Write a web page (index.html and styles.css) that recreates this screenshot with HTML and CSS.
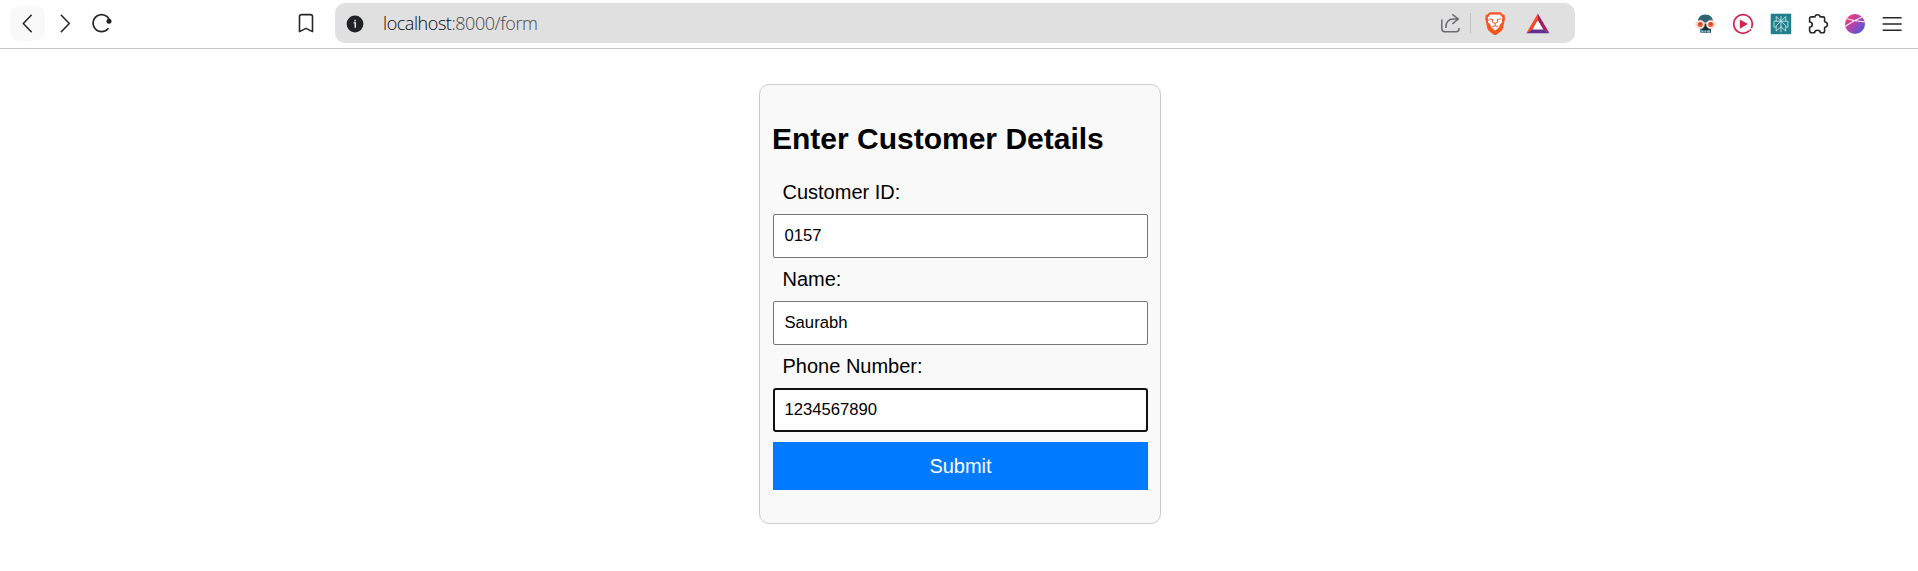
FILE: index.html
```html
<!DOCTYPE html>
<html lang="en">
<head>
<meta charset="utf-8">
<title>Customer form</title>
<link rel="stylesheet" href="styles.css">
</head>
<body>
<header class="toolbar">
  <nav class="nav">
    <span class="nav-button"><svg width="35" height="35" viewBox="10 6 35 35"><path class="line" d="M31.200 15.300 23.300 23.500l7.900 8.200"/></svg></span>
    <svg class="forward" width="35" height="35" viewBox="48 6 35 35"><path class="line" d="m61.300 15.300 8 8.200-8 8.200"/></svg>
    <svg width="35" height="35" viewBox="85 6 35 35"><path class="line" d="M108 28.700A8.500 8.500 0 1 1 109.300 19.600"/><circle class="ink" cx="109" cy="21.200" r="2.500"/></svg>
  </nav>
  <svg class="bookmark" width="16" height="20" viewBox="298 13 16 20"><path class="line" d="M301.500 14.600h9q2 0 2 2v15l-6.500-3.200-6.500 3.200v-15q0-2 2-2Z"/></svg>
  <div class="address">
    <svg class="info" width="18" height="18" viewBox="346 15 18 18"><circle class="ink" cx="355" cy="24" r="8.400"/><path d="M353.600 22.900h1.700v4.800M355.100 19.700v1.700" fill="none" stroke="#eee" stroke-width="1.400"/></svg>
    <span class="url"><span class="host">localhost</span>:8000/form</span>
    <svg class="share" width="20" height="20" viewBox="1440 13.500 20 20"><path d="M1441.800 20v9q0 3.200 3.200 3.200h11q3 0 3-2.600v-1M1445.800 28.500q0-9 8-9h4.200M1452.400 14.800l5.800 4.700-5.800 4.800" fill="none" stroke="#6a6c6f" stroke-width="1.500"/></svg>
    <span class="divider"></span>
    <svg class="brave" width="20" height="23" viewBox="1485 12 20 23"><path fill="#fb5420" d="m1489.600 12.200h11l2.200 2.300 1.700.3.500 4-2 9.400q-.6 2.300-2.600 3.600l-3.600 2.600q-1.700 1-3.400 0l-3.600-2.600q-2-1.300-2.500-3.600l-2-9.400.5-4 1.800-.3Z"/><path fill="#fff" d="m1490.400 14.300 2.500.5 2.200-.4 2.200.4 2.500-.5 2.800 3.500-1 2.300.7 2-2.700 3-.3 2-4.200 3.600-4.200-3.600-.3-2-2.700-3 .7-2-1-2.300Z"/><path fill="none" stroke="#fb5420" stroke-width="1" d="m1489.400 18.800 3.700.9-.9 2.200 2.900 1.600 2.900-1.600-.9-2.200 3.700-.9M1495.100 23.500v2.200M1491.900 27.200l3.200-1.600 3.200 1.600"/></svg>
    <svg class="bat" width="24" height="21" viewBox="1526.500 12.500 24 21"><path fill="#ff4724" d="M1538.300 13v7l-5.200 8.700-6.300 4Z"/><path fill="#9e1f63" d="m1538.300 13 11.700 19.700-6.500-4-5.200-8.700Z"/><path fill="#662d91" d="m1526.800 32.800 6.400-4.200h10.200l6.600 4.200Z"/><path fill="#fff" d="m1538.300 20 5.400 8.900h-10.600Z"/></svg>
  </div>
  <div class="extensions">
    <svg width="22" height="22" viewBox="1695 13 22 22"><path fill="#2d6370" d="M1697.600 23q0-8.600 7.800-8.600t7.900 8.600v3h-2.500v6.700h-10.600V26h-2.600Z"/><path fill="#12303a" d="M1703 22h10.300v4h-2.500v6.700h-9Z"/><path fill="#8bcbd1" d="M1701.300 30.300h8.700v2.400h-8.700Z"/><path d="M1704 30v3m2.700-3v3" stroke="#244f5c"/><g fill="#fff4ee" stroke="#f3b5a2" stroke-width=".6"><circle cx="1700.200" cy="24.500" r="4.300"/><circle cx="1710.700" cy="24.500" r="4.300"/></g><path stroke="#fff4ee" stroke-width="1.200" d="M1703.500 23h4"/><g fill="#ee6542"><circle cx="1700.200" cy="24.500" r="2.700"/><circle cx="1710.700" cy="24.500" r="2.700"/></g><path stroke="#743b35" d="M1698.700 24h3m7.500 0h3"/></svg>
    <svg width="22" height="22" viewBox="1732.500 12.500 22 22"><circle cx="1743.500" cy="23.500" r="9.300" fill="none" stroke="#d32753" stroke-width="1.800" stroke-dasharray="4.200 3.200 51.040"/><circle cx="1750.900" cy="29.600" r="1" fill="#d32753"/><path fill="#d32753" d="M1740.300 18.900v9.400l8.200-4.700Z"/></svg>
    <svg width="22" height="22" viewBox="1769.500 12.500 22 22"><path fill="#20808d" d="M1770.200 13.200h20.500v20.500h-20.500Z"/><path fill="none" stroke="#c6e2e3" stroke-width=".9" d="M1780.500 15.500v16.300M1775.700 16l4.800 4.700 4.700-4.700v4.700h2.200v6h-2.200v3.800l-4.700-4.200-4.800 4.200v-3.800h-2.200v-6h2.200ZM1775.700 26.700v-1.600l4.800-4.400 4.700 4.400v1.600M1775.700 20.700h9.500"/></svg>
    <svg width="22" height="22" viewBox="1807 12.500 22 22"><path class="line" d="M1811 16.400h4q-.1-2.100 2.500-2.100t2.600 2.100h3.100q1.400 0 1.400 1.400v3.400q2.800.4 2.800 2.900t-2.800 2.900v3.200q0 2.100-1.600 2.100h-2.600q-.2-2.500-2.900-2.500t-2.900 2.500h-2.500q-2.500 0-2.500-2.300v-3.300q2.700-.2 2.700-2.600t-2.700-2.600v-3.400q0-1.700 1.400-1.700Z"/></svg>
    <svg width="22" height="22" viewBox="1844 12 22 22"><defs><linearGradient id="orb" x1="0" y1="0" x2="1" y2="1"><stop offset=".15" stop-color="#ed397a"/><stop offset=".5" stop-color="#a846b1"/><stop offset=".9" stop-color="#4b55dd"/></linearGradient><clipPath id="disc"><circle cx="1855" cy="23" r="10"/></clipPath></defs><circle cx="1855" cy="23" r="10" fill="url(#orb)"/><path clip-path="url(#disc)" d="M1845 17q9 3.300 20 3.800M1845 25.500q8-5.500 17-9.500" stroke="#ffe8f5" stroke-width="1.300" fill="none"/></svg>
    <svg width="22" height="22" viewBox="1881.500 12.500 22 22"><path class="line" d="M1883.800 17.300h17.800m-17.800 6.200h17.800m-17.800 6.300h17.800"/></svg>
  </div>
</header>
<main class="page">
  <form class="card">
    <h2 class="title">Enter Customer Details</h2>
    <label class="label" for="cid">Customer ID:</label>
    <input class="field" id="cid" type="text" value="0157">
    <label class="label" for="name">Name:</label>
    <input class="field" id="name" type="text" value="Saurabh">
    <label class="label" for="phone">Phone Number:</label>
    <input class="field field-active" id="phone" type="text" value="1234567890">
    <button class="submit" type="button">Submit</button>
  </form>
</main>
</body>
</html>
```
FILE: styles.css
```css
* { box-sizing: border-box; }
body { margin: 0; background: #fff; color: #000; font-family: "Liberation Sans", Arial, sans-serif; }
svg { display: block; flex: none; }
.line { fill: none; stroke: #25272b; stroke-width: 1.6; stroke-linecap: round; stroke-linejoin: round; }
.ink { fill: #202227; }
.toolbar { display: flex; height: 49px; border-bottom: 1px solid #c9c9c9; padding-left: 10px; }
.nav { display: flex; width: 288px; padding-top: 6px; gap: 2px; }
.nav-button { width: 35px; height: 35px; border-radius: 9px; background: #f9f9f9; }
.forward { margin-left: 1px; }
.bookmark { margin-top: 13px; }
.address { display: flex; align-items: center; width: 1240px; height: 40px; margin: 3px 0 0 21px; padding-left: 11px; border-radius: 10px; background: #e0e0e0; }
.info { margin-top: 2px; }
.url { width: 1057px; margin-left: 19px; padding-bottom: 1px; font: 300 18px/24px "Open Sans", "Noto Sans", sans-serif; letter-spacing: -.44px; color: #45474b; white-space: nowrap; }
.host { color: #08090c; }
.divider { width: 1px; height: 20px; margin-left: 10px; background: #c3c3c3; }
.brave { margin-left: 14px; }
.bat { margin-left: 21px; }
.extensions { display: flex; gap: 15.3px; margin: 12.5px 0 0 120px; }
.page { display: flex; justify-content: center; padding-top: 35px; padding-left: 2px; }
.card { display: flex; flex-direction: column; width: 402px; height: 440px; padding: 37px 12px 0 13px; border: 1px solid #ccc; border-radius: 10px; background: #f9f9f9; }
.title { margin: 0 0 24px -1px; font-size: 30px; line-height: 34px; }
.label { padding-left: 9.500px; font-size: 20px; line-height: 24px; }
.field { width: 100%; height: 44px; margin: 10px 0 9px; padding: 0 10.500px; border: 1px solid #767676; border-radius: 2px; background: #fff; color: #000; font: 16.667px "Liberation Sans", Arial, sans-serif; outline: none; }
.field-active { padding: 0 9.500px; border: 2px solid #101010; border-radius: 3px; margin-bottom: 10px; }
.submit { height: 48px; padding: 0; border: 0; background: #007bff; color: #fff; font: 20px "Liberation Sans", Arial, sans-serif; }
```
